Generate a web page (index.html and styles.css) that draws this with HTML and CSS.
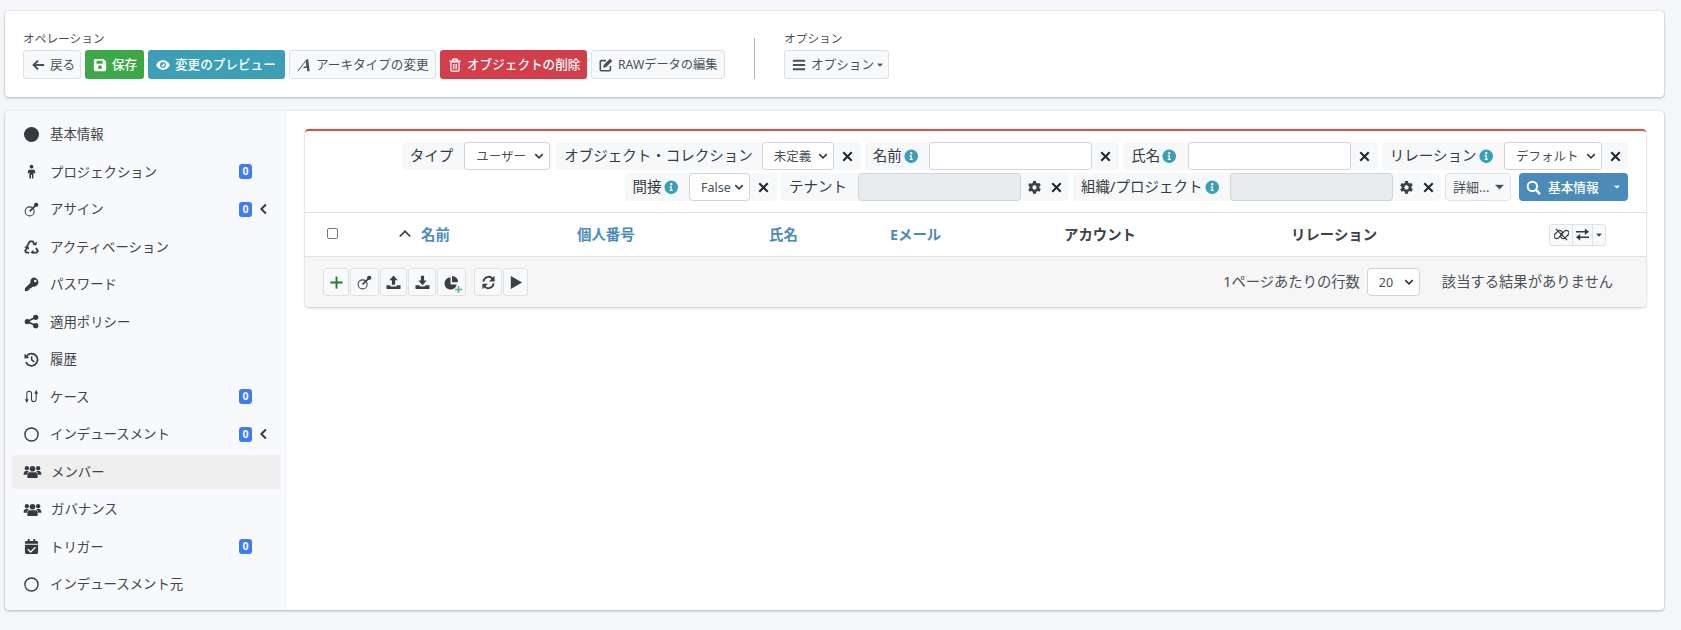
FILE: index.html
```html
<!DOCTYPE html>
<html lang="ja">
<head>
<meta charset="utf-8">
<title>メンバー</title>
<link rel="stylesheet" href="styles.css">
</head>
<body>
<svg class="defs" aria-hidden="true">
  <symbol id="i-times" viewBox="0 0 16 16"><path d="M3.5 3.5l9 9M12.500 3.500l-9 9" fill="none" stroke="currentColor" stroke-width="2.200"/></symbol>
  <symbol id="i-info" viewBox="0 0 16 16"><path fill-rule="evenodd" d="M8 .5a7.500 7.500 0 1 1 0 15 7.500 7.500 0 0 1 0-15zM8 3.300a1.300 1.300 0 1 0 0 2.600 1.300 1.300 0 0 0 0-2.600zM6.300 7v1.300h1v2.500h-1V12h3.400v-1.200h-1V7z"/></symbol>
  <symbol id="i-cog" viewBox="0 0 16 16"><path fill-rule="evenodd" d="M6.500 1h3l.4 2 1.400.8 1.900-.7 1.500 2.600-1.500 1.300v1.600l1.500 1.300-1.500 2.600-1.900-.7-1.400.8-.4 2H6.500l-.4-2-1.400-.8-1.900.7-1.500-2.600L2.800 8.800V7.200L1.300 5.900l1.500-2.600 1.900.7 1.400-.8zM8 5.700a2.300 2.300 0 1 0 0 4.600 2.300 2.300 0 0 0 0-4.600z"/></symbol>
  <symbol id="i-assign" viewBox="0 0 16 16"><circle cx="6" cy="10" r="4.800" fill="none" stroke="currentColor" stroke-width="1.100"/><path d="M6 10l7-7" stroke="currentColor" stroke-width="1.700"/><circle cx="13" cy="3" r="2.300"/></symbol>
  <symbol id="i-users" viewBox="0 0 20 16"><circle cx="4" cy="4.500" r="2.300"/><circle cx="16" cy="4.500" r="2.300"/><circle cx="10" cy="5" r="3"/><path d="M.5 11c0-2 1-3.500 2.500-3.500h2c.4 0 .8.100 1.100.3-1.200.8-1.900 2-2 3.700H.5zM19.500 11c0-2-1-3.500-2.500-3.500h-2c-.4 0-.8.100-1.100.3 1.200.8 1.900 2 2 3.700h3.600zM6.800 8.800h6.400c1.400 0 2.300 1.200 2.300 2.700V14a1 1 0 0 1-1 1h-9a1 1 0 0 1-1-1v-2.500c0-1.500.9-2.700 2.300-2.700z"/></symbol>
  <symbol id="i-caret" viewBox="0 0 8 5"><path d="M0 .5h8L4 4.800z"/></symbol>
  <symbol id="i-chev" viewBox="0 0 16 16"><path d="M10.500 2L4.500 8l6 6" fill="none" stroke="currentColor" stroke-width="2.600"/></symbol>
</svg>

<div class="page">
  <section class="card top">
    <div class="group">
      <div class="group-label">オペレーション</div>
      <div class="btn-row">
        <button class="btn light w-back"><svg class="ic" viewBox="0 0 16 16"><path d="M15 8H3M8 3L3 8l5 5" fill="none" stroke="currentColor" stroke-width="2.400"/></svg><span>戻る</span></button>
        <button class="btn success strong w-save"><svg class="ic" viewBox="0 0 16 16"><path fill-rule="evenodd" d="M2.500 1h9.500l3 3V13.500a1.500 1.500 0 0 1-1.500 1.500h-11A1.500 1.500 0 0 1 1 13.500v-11A1.500 1.500 0 0 1 2.500 1zM4 3v3.500h7V3zM8 8.400a2.200 2.200 0 1 0 0 4.400 2.200 2.200 0 0 0 0-4.400z"/></svg><span>保存</span></button>
        <button class="btn info strong w-prev"><svg class="ic" viewBox="0 0 16 16"><path fill-rule="evenodd" d="M8 2.500c-4 0-6.900 3-7.800 5.500.9 2.500 3.800 5.500 7.800 5.500s6.900-3 7.800-5.500c-.9-2.500-3.800-5.500-7.800-5.500zM8 4.600a3.400 3.400 0 1 1 0 6.800 3.400 3.400 0 0 1 0-6.800z"/><path d="M8 6a2 2 0 1 1-1.900 2.500C7 8.700 8.300 7.500 8 6z"/></svg><span>変更のプレビュー</span></button>
        <button class="btn light w-arch"><svg class="ic" viewBox="0 0 16 16"><path d="M1 15L11 2" fill="none" stroke="currentColor" stroke-width="1.100"/><path d="M10.800 1.500h2l1.700 13.500h-2.800l-.3-3.500H7l1.100-1.800h2.500l-.4-4.700z"/></svg><span>アーキタイプの変更</span></button>
        <button class="btn danger strong w-del"><svg class="ic" viewBox="0 0 16 16"><path d="M5.500 3V1.300h5V3M1.500 3.500h13" fill="none" stroke="currentColor" stroke-width="1.500"/><rect x="3.300" y="4.500" width="9.400" height="10.500" rx="1.300" fill="none" stroke="currentColor" stroke-width="1.500"/><path d="M6.200 6.800v6M8 6.800v6M9.800 6.800v6" stroke="currentColor" stroke-width="1"/></svg><span>オブジェクトの削除</span></button>
        <button class="btn light w-raw"><svg class="ic" viewBox="0 0 16 16"><path d="M13 9v4.500a1 1 0 0 1-1 1H2.500a1 1 0 0 1-1-1V4a1 1 0 0 1 1-1H8" fill="none" stroke="currentColor" stroke-width="1.800"/><path d="M12.500.8l2.700 2.700L8 10.700l-3.200.5.500-3.200z"/></svg><span>RAWデータの編集</span></button>
      </div>
    </div>
    <div class="divider"></div>
    <div class="group">
      <div class="group-label">オプション</div>
      <div class="btn-row">
        <button class="btn light w-opt"><svg class="ic" viewBox="0 0 16 16"><path d="M1 2h14v2.400H1zM1 6.800h14v2.400H1zM1 11.600h14V14H1z"/></svg><span>オプション</span><svg class="caret" viewBox="0 0 8 5"><use href="#i-caret"/></svg></button>
      </div>
    </div>
  </section>

  <section class="card main">
    <nav class="side">
      <a class="item"><svg class="nav-ic" viewBox="0 0 16 16"><circle cx="8" cy="8" r="8"/></svg><span class="name">基本情報</span></a>
      <a class="item"><svg class="nav-ic" viewBox="0 0 16 16"><circle cx="8" cy="2.800" r="2"/><path d="M4.800 6h6.400l1 3.500-1.600.5-.6-1.500v7H8.500v-4h-1v4H5.800v-7L5.200 10l-1.400-.5z"/></svg><span class="name">プロジェクション</span><span class="badge">0</span></a>
      <a class="item"><svg class="nav-ic"><use href="#i-assign"/></svg><span class="name">アサイン</span><span class="badge">0</span><svg class="chev"><use href="#i-chev"/></svg></a>
      <a class="item"><svg class="nav-ic" viewBox="0 0 16 16"><path d="M3.300 7.500L6.300 2.500H9.300L10.800 5" fill="none" stroke="currentColor" stroke-width="1.900"/><path d="M8.800 5.800l4.200 1.200 1-4.200z"/><path d="M12.800 9.500L14.800 13 13.500 14.500H9.500" fill="none" stroke="currentColor" stroke-width="1.900"/><path d="M10 11.500L6.800 14.500 10 16z"/><path d="M5.500 14.500H2.500L1.200 12.800 3 9.800" fill="none" stroke="currentColor" stroke-width="1.900"/><path d="M0 8.500l4.500-1.500 1 4.500z"/></svg><span class="name">アクティベーション</span></a>
      <a class="item"><svg class="nav-ic" viewBox="0 0 16 16"><path fill-rule="evenodd" d="M10.500 0.500a5 5 0 1 1-1.500 9.800L7.500 12H6v1.500H4.500V15H1v-3l5.900-5.900A5 5 0 0 1 10.500.5zM12 2.800a1.400 1.400 0 1 0 0 2.800 1.400 1.400 0 0 0 0-2.800z"/></svg><span class="name">パスワード</span></a>
      <a class="item"><svg class="nav-ic" viewBox="0 0 16 16"><circle cx="12.500" cy="3.500" r="2.800"/><circle cx="12.500" cy="12.500" r="2.800"/><circle cx="3.500" cy="8" r="2.800"/><path d="M3.500 8l9-4.500M3.500 8l9 4.500" stroke="currentColor" stroke-width="1.800"/></svg><span class="name">適用ポリシー</span></a>
      <a class="item"><svg class="nav-ic" viewBox="0 0 16 16"><path d="M2.800 4.300A6.500 6.500 0 1 1 2 10.800" fill="none" stroke="currentColor" stroke-width="1.800"/><path d="M.5 1.500l5.200 4.800L.5 7z"/><path d="M8.200 4.500v4l2.800 2" fill="none" stroke="currentColor" stroke-width="1.600"/></svg><span class="name">履歴</span></a>
      <a class="item"><svg class="nav-ic" viewBox="0 0 16 16"><path d="M3 12V5a2.500 2.500 0 0 1 5 0v6a2.500 2.500 0 0 0 5 0V4" fill="none" stroke="currentColor" stroke-width="1.100"/><path d="M1 11h4l-2 4zM11 5h4l-2-4z"/></svg><span class="name">ケース</span><span class="badge">0</span></a>
      <a class="item"><svg class="nav-ic" viewBox="0 0 16 16"><circle cx="8" cy="8" r="7" fill="none" stroke="currentColor" stroke-width="1.500"/></svg><span class="name">インデュースメント</span><span class="badge">0</span><svg class="chev"><use href="#i-chev"/></svg></a>
      <a class="item active"><svg class="nav-wide"><use href="#i-users"/></svg><span class="name">メンバー</span></a>
      <a class="item"><svg class="nav-wide"><use href="#i-users"/></svg><span class="name">ガバナンス</span></a>
      <a class="item"><svg class="nav-ic" viewBox="0 0 16 16"><path fill-rule="evenodd" d="M4 0h2v2h4V0h2v2h1.500A1.500 1.500 0 0 1 15 3.500V5H1V3.500A1.500 1.500 0 0 1 2.500 2H4zM1 6h14v8.500a1.500 1.500 0 0 1-1.500 1.500h-11A1.500 1.500 0 0 1 1 14.500zm10.800 2.300L7 12.800 4.600 10.500l-1 1L7 14.800l5.800-5.500z"/></svg><span class="name">トリガー</span><span class="badge">0</span></a>
      <a class="item"><svg class="nav-ic" viewBox="0 0 16 16"><circle cx="8" cy="8" r="7" fill="none" stroke="currentColor" stroke-width="1.500"/></svg><span class="name">インデュースメント元</span></a>
    </nav>

    <div class="content">
      <div class="box">
        <div class="search">
          <div class="chip"><span class="lbl">タイプ</span><select class="sel w-type"><option>ユーザー</option></select></div>
          <div class="chip with-x"><span class="lbl wide">オブジェクト・コレクション</span><select class="sel w-coll"><option>未定義</option></select><span class="x"><svg class="x-ic"><use href="#i-times"/></svg></span></div>
          <div class="chip with-x"><span class="lbl">名前<svg class="inf"><use href="#i-info"/></svg></span><input class="inp"><span class="x"><svg class="x-ic"><use href="#i-times"/></svg></span></div>
          <div class="chip with-x"><span class="lbl">氏名<svg class="inf"><use href="#i-info"/></svg></span><input class="inp"><span class="x"><svg class="x-ic"><use href="#i-times"/></svg></span></div>
          <div class="chip with-x"><span class="lbl">リレーション<svg class="inf"><use href="#i-info"/></svg></span><select class="sel w-rel"><option>デフォルト</option></select><span class="x narrow"><svg class="x-ic"><use href="#i-times"/></svg></span></div>
          <div class="chip with-x"><span class="lbl">間接<svg class="inf"><use href="#i-info"/></svg></span><select class="sel w-false"><option>False</option></select><span class="x"><svg class="x-ic"><use href="#i-times"/></svg></span></div>
          <div class="chip with-x"><span class="lbl">テナント</span><input class="inp off" disabled><span class="cog"><svg class="x-ic"><use href="#i-cog"/></svg></span><span class="x tight"><svg class="x-ic"><use href="#i-times"/></svg></span></div>
          <div class="chip with-x"><span class="lbl">組織/プロジェクト<svg class="inf"><use href="#i-info"/></svg></span><input class="inp off" disabled><span class="cog"><svg class="x-ic"><use href="#i-cog"/></svg></span><span class="x tight"><svg class="x-ic"><use href="#i-times"/></svg></span></div>
          <button class="more"><span>詳細...</span><svg class="caret big" viewBox="0 0 8 5"><use href="#i-caret"/></svg></button>
          <button class="go"><svg class="go-ic" viewBox="0 0 16 16"><circle cx="6.800" cy="6.800" r="5" fill="none" stroke="currentColor" stroke-width="2.200"/><path d="M10.500 10.500l4.500 4.500" stroke="currentColor" stroke-width="2.600"/></svg><span class="go-text">基本情報</span><svg class="caret" viewBox="0 0 8 5"><use href="#i-caret"/></svg></button>
        </div>

        <div class="thead">
          <div class="th"><span class="check"></span></div>
          <div class="th link"><svg class="up" viewBox="0 0 16 16"><path d="M2 12l6-6 6 6" fill="none" stroke="currentColor" stroke-width="2"/></svg><span>名前</span></div>
          <div class="th link"><span>個人番号</span></div>
          <div class="th link"><span>氏名</span></div>
          <div class="th link"><span>Eメール</span></div>
          <div class="th"><span>アカウント</span></div>
          <div class="th"><span>リレーション</span></div>
          <div class="th">
            <div class="seg">
              <span class="seg-b s1"><svg class="seg-ic" viewBox="0 0 16 16"><rect x="-.5" y="5.300" width="10" height="5.400" rx="2.700" transform="rotate(-45 4.500 8)" fill="none" stroke="currentColor" stroke-width="1.300"/><rect x="6.500" y="5.300" width="10" height="5.400" rx="2.700" transform="rotate(-45 11.500 8)" fill="none" stroke="currentColor" stroke-width="1.300"/><path d="M2 2l12 12" stroke="currentColor" stroke-width="1.400"/></svg></span>
              <span class="seg-b s2"><svg class="seg-ic" viewBox="0 0 16 16"><path d="M1 5h11" stroke="currentColor" stroke-width="1.700"/><path d="M10.500 1.500L15 5l-4.500 3.500z"/><path d="M15 11H4" stroke="currentColor" stroke-width="1.700"/><path d="M5.500 7.500L1 11l4.500 3.500z"/></svg></span>
              <span class="seg-b s3"><svg class="caret" viewBox="0 0 8 5"><use href="#i-caret"/></svg></span>
            </div>
          </div>
        </div>

        <div class="tfoot">
          <div class="tools">
            <span class="tool t1"><svg class="t-ic plus" viewBox="0 0 16 16"><path d="M8 1.500v13M1.500 8h13" stroke="currentColor" stroke-width="2"/></svg></span>
            <span class="tool t2"><svg class="t-ic"><use href="#i-assign"/></svg></span>
            <span class="tool t3"><svg class="t-ic" viewBox="0 0 16 16"><path d="M8 .5l4.500 5H9.700v5H6.300v-5H3.500z"/><path d="M.5 11h4.200v1.300h6.600V11h4.200v3a1 1 0 0 1-1 1h-13a1 1 0 0 1-1-1z"/></svg></span>
            <span class="tool t4"><svg class="t-ic" viewBox="0 0 16 16"><path d="M6.300.8h3.400v5h2.800L8 11 3.500 5.800h2.800z"/><path d="M.5 11h4.200l1.300 1.300h4L11.300 11h4.200v3a1 1 0 0 1-1 1h-13a1 1 0 0 1-1-1z"/></svg></span>
            <span class="tool t5"><svg class="t-ic" viewBox="0 0 16 16"><path d="M7 2.500A6.500 6.500 0 1 0 13.500 10H7z"/><path d="M8.500 1A6.500 6.500 0 0 1 15 7.800H8.500z"/></svg><svg class="pie-plus" viewBox="0 0 8 8"><path d="M4 0v8M0 4h8" stroke="currentColor" stroke-width="1.800"/></svg></span>
            <span class="tool t6"><svg class="t-ic" viewBox="0 0 16 16"><path d="M2.500 7A5.700 5.700 0 0 1 12.500 4M13.500 9A5.700 5.700 0 0 1 3.500 12" fill="none" stroke="currentColor" stroke-width="2"/><path d="M14.500.8v6h-6zM1.500 15.200v-6h6z"/></svg></span>
            <span class="tool t7"><svg class="t-ic" viewBox="0 0 16 16"><path d="M3 1L15 8 3 15z"/></svg></span>
          </div>
          <div class="pager">
            <span class="pp-text">1ページあたりの行数</span>
            <select class="sel w-pp"><option>20</option></select>
            <span class="none">該当する結果がありません</span>
          </div>
        </div>
      </div>
    </div>
  </section>
</div>
</body>
</html>
```

FILE: styles.css
```css
* { box-sizing: border-box; }
html, body { margin: 0; padding: 0; height: 100%; overflow: hidden; }
body {
  background: #f4f6f9;
  color: #343a40;
  font-family: "Noto Sans", "Noto Sans CJK JP", sans-serif;
  font-size: 14px;
}
.defs { display: none; }
svg { fill: currentColor; flex: none; }
button { text-align: left; }

.page { padding: 11px 17px 0 5px; width: 1681px; }
.card {
  background: #fff;
  border-radius: 4px;
  box-shadow: 0 0 1px rgba(0,0,0,.2), 0 1px 3px rgba(0,0,0,.25);
}

.top {
  height: 86px;
  padding: 18px 18px 0;
  display: flex;
  align-items: flex-start;
  margin-bottom: 14px;
}
.group-label { font-size: 11.700px; line-height: 18px; color: #495057; margin-bottom: 3px; }
.btn-row { display: flex; gap: 4px; }
.btn {
  height: 29px;
  display: flex;
  align-items: center;
  padding: 0 0 2px 7px;
  border-radius: 3px;
  border: 1px solid #dcdfe3;
  font: inherit;
  font-size: 12.600px;
  white-space: nowrap;
  color: #495057;
}
.ic { width: 14px; height: 14px; margin: 2px 5px 0 0; }
.light { background: #f8f9fa; }
.strong { color: #fff; font-weight: 500; border-color: transparent; }
.success { background: #3da848; }
.info { background: #3c9fb6; }
.danger { background: #d23e4b; }
.w-back { width: 58px; }
.w-save { width: 59px; }
.w-prev { width: 137px; }
.w-arch { width: 147px; }
.w-del { width: 147px; }
.w-raw { width: 134px; font-size: 12.200px; }
.w-opt { width: 105px; }
.divider { width: 1px; height: 41px; margin: 9px 29px 0; background: #adb5bd; }
.caret { width: 6px; height: 4px; margin-left: 3px; }
.btn .caret { margin-top: 2px; }
.caret.big { width: 9px; height: 6px; margin-left: 6px; }

.main { height: 499px; display: flex; overflow: hidden; }
.side {
  width: 282px;
  flex: none;
  background: #f8f9fc;
  padding: 6px 7px 0;
}
.item {
  height: 34px;
  margin-bottom: 3.500px;
  padding: 0 9px 2px 12px;
  display: flex;
  align-items: center;
  border-radius: 4px;
  color: #3f454b;
  font-size: 13.400px;
}
.item.active { background: #efefef; }
.nav-ic { width: 15px; height: 15px; margin: 2px 11px 0 0; color: #343a40; }
.nav-wide { width: 19px; height: 15px; margin: 2px 9px 0 -1px; color: #343a40; }
.name { flex: 1; white-space: nowrap; }
.badge {
  width: 13px; height: 15px;
  border-radius: 3px;
  background: #3d7bf7;
  color: #fff;
  font-size: 10.500px;
  font-weight: 700;
  line-height: 14px;
  text-align: center;
  margin: 2px 19px 0 0;
}
.chev { width: 12px; height: 12px; margin: 2px 1px 0 -13px; color: #343a40; }

.content { flex: 1; padding: 18px 18px 0; min-width: 0; }
.box {
  height: 178px;
  border-top: 2px solid #d9533f;
  border-radius: 4px;
  background: #fff;
  box-shadow: 0 0 1px rgba(0,0,0,.2), 0 1px 3px rgba(0,0,0,.2);
  overflow: hidden;
}
.search {
  height: 82px;
  padding: 11px 18px 0 0;
  display: flex;
  flex-wrap: wrap;
  justify-content: flex-end;
  align-content: flex-start;
  gap: 3px 4px;
  border-bottom: 1px solid #dee2e6;
}
.chip {
  height: 28px;
  display: flex;
  align-items: center;
  background: #f6f8fa;
  border-radius: 4px;
  padding-left: 8px;
  padding-right: 2px;
}
.chip.with-x { padding-right: 0; }
.lbl {
  display: flex;
  align-items: center;
  margin-right: 11px;
  padding-bottom: 3px;
  white-space: nowrap;
  color: #343a40;
  font-size: 14.500px;
}
.lbl.wide { margin-right: 9px; }
.inf { width: 14.500px; height: 14.500px; margin: 3px 0 0 2px; color: #3c9fb6; }
.sel, .inp {
  height: 28px;
  border: 1px solid #ced4da;
  border-radius: 4px;
  background-color: #fff;
  font-family: inherit;
  color: #495057;
}
.sel {
  appearance: none;
  -webkit-appearance: none;
  font-size: 12.500px;
  padding: 0 0 0 11px;
  background-image: url("data:image/svg+xml,%3Csvg xmlns='http://www.w3.org/2000/svg' viewBox='0 0 16 16'%3E%3Cpath fill='none' stroke='%23343a40' stroke-width='2.600' d='M2 5l6 6 6-6'/%3E%3C/svg%3E");
  background-repeat: no-repeat;
  background-position: right 5px center;
  background-size: 10px 10px;
}
.w-type { width: 86px; }
.w-coll { width: 72px; }
.w-rel { width: 98px; }
.w-false { width: 61px; }
.w-pp { width: 53px; }
.inp { width: 163px; padding: 0; }
.inp.off { background: #e9ecef; }
.x { width: 27px; display: flex; justify-content: center; color: #212529; }
.x.narrow { width: 26px; }
.x.tight { width: 22px; padding-right: 3px; }
.cog { width: 26px; display: flex; justify-content: center; padding-left: 1px; color: #3c4045; }
.x-ic { width: 15px; height: 15px; }
.more {
  height: 28px; width: 66px;
  display: flex; align-items: center;
  padding: 0 0 1px 7px;
  border: 1px solid #dee2e6; border-radius: 4px;
  background: #f8f9fa;
  font: inherit; font-size: 13px; color: #495057;
  white-space: nowrap;
}
.go {
  height: 28px; width: 109px;
  margin-left: 4px;
  display: flex; align-items: center;
  padding: 0 0 2px 7px;
  border: 0; border-radius: 4px;
  background: #4b8bba; color: #fff;
  font: inherit; font-size: 12.700px; font-weight: 500;
  white-space: nowrap;
}
.go-ic { width: 15px; height: 15px; margin: 2px 7px 0 0; }
.go-text { width: 63px; }
.go .caret { margin: 2px 0 0 3px; }

.thead {
  height: 44px;
  display: grid;
  grid-template-columns: 71px 179px 192px 121px 174px 227px 258px 56px;
  padding-left: 22px;
  align-items: center;
  border-bottom: 1px solid #dee2e6;
}
.th { font-weight: 700; font-size: 14.400px; white-space: nowrap; color: #3c4248; display: flex; align-items: center; height: 40px; margin-top: -3px; }
.th.link { color: #4b8bba; }
.check { width: 11px; height: 11px; border: 1px solid #767676; border-radius: 2px; background: #fff; margin-top: 1px; }
.up { width: 14px; height: 14px; margin-right: 9px; color: #343a40; }
.seg {
  display: flex; height: 22px;
  margin-top: 3px;
  border: 1px solid #dee2e6; border-radius: 3px;
  background: #f8f9fa;
}
.seg-b { display: flex; align-items: center; justify-content: center; }
.s1 { width: 23px; border-right: 1px solid #dee2e6; }
.s2 { width: 20px; border-right: 1px solid #dee2e6; }
.s3 { width: 12px; }
.s3 .caret { margin: 0; }
.seg-ic { width: 15px; height: 15px; color: #343a40; }

.tfoot {
  height: 50px;
  background: #f6f6f7;
  display: flex;
  align-items: center;
  justify-content: space-between;
  padding: 0 33px 0 18px;
}
.tools { display: flex; gap: 1px; }
.tool {
  position: relative;
  height: 28px;
  display: flex; align-items: center; justify-content: center;
  border: 1px solid #dee2e6; border-radius: 3px;
  background: #f8f9fa;
  color: #3c4045;
}
.t1 { width: 26px; }
.t2 { width: 29px; }
.t3 { width: 27px; }
.t4 { width: 28px; }
.t5 { width: 29px; margin-right: 7px; }
.t6 { width: 28px; }
.t7 { width: 25px; }
.t-ic { width: 15px; height: 15px; }
.plus { color: #1f7d24; }
.pie-plus { position: absolute; right: 3px; bottom: 2px; width: 7px; height: 7px; color: #52b788; }
.pager { display: flex; align-items: center; color: #495057; font-size: 14.300px; }
.pp-text { margin-right: 7px; padding-bottom: 3px; }
.none { margin-left: 22px; padding-bottom: 3px; }
```
